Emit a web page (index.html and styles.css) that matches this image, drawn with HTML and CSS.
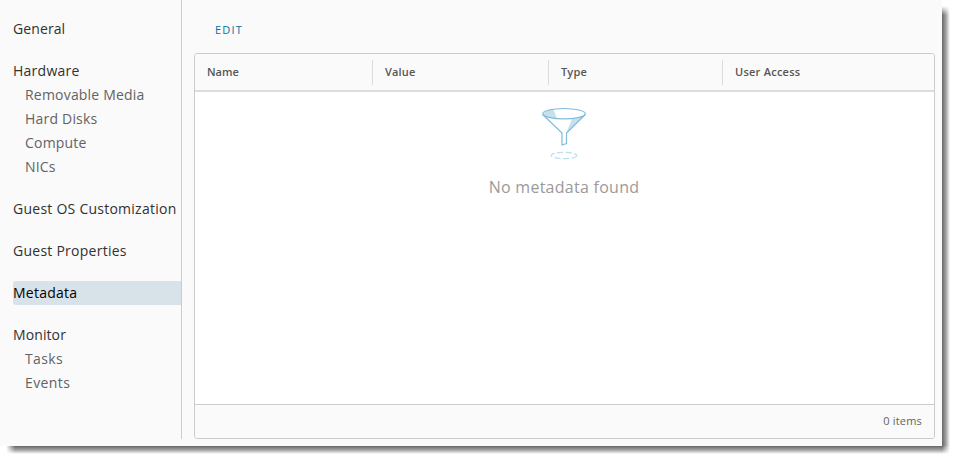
FILE: index.html
```html
<!DOCTYPE html>
<html lang="en">
<head>
<meta charset="utf-8">
<title>Metadata</title>
<link rel="stylesheet" href="styles.css">
</head>
<body>
<div class="window">
  <nav class="sidebar">
    <section class="group"><a class="item general">General</a></section>
    <section class="group">
      <a class="item hardware">Hardware</a>
      <a class="item sub removable">Removable Media</a>
      <a class="item sub disks">Hard Disks</a>
      <a class="item sub compute">Compute</a>
      <a class="item sub nics">NICs</a>
    </section>
    <section class="group"><a class="item customization">Guest OS Customization</a></section>
    <section class="group"><a class="item properties">Guest Properties</a></section>
    <section class="group"><a class="item active">Metadata</a></section>
    <section class="group">
      <a class="item monitor">Monitor</a>
      <a class="item sub tasks">Tasks</a>
      <a class="item sub events">Events</a>
    </section>
  </nav>
  <main class="content">
    <div class="toolbar"><a class="edit">EDIT</a></div>
    <div class="datagrid">
      <div class="head">
        <div class="col"><span class="h-name">Name</span></div>
        <div class="col"><span class="h-value">Value</span></div>
        <div class="col"><span class="h-type">Type</span></div>
        <div class="col"><span class="h-access">User Access</span></div>
      </div>
      <div class="empty">
        <svg class="funnel" width="46" height="54" viewBox="0 0 46 54" fill="none">
          <path d="M2 7C4 3.500 8 2.300 12.500 2L16 11.500C9 11 4 10 2 7Z" fill="#c5e1ef"/>
          <path d="M43.500 8.500L26 26V24L31 12C36 11.500 41 10.500 43.500 8.500Z" fill="#c5e1ef"/>
          <ellipse cx="23" cy="6.700" rx="21.300" ry="5.200" stroke="#7fbddb" stroke-width="1.200"/>
          <path d="M1.700 7.500L21 26V38L25.500 36.500V26L44.300 7.500" stroke="#7fbddb" stroke-width="1.200"/>
          <ellipse cx="23" cy="48.500" rx="12.800" ry="3.200" stroke="#bfdfed" stroke-width="1.200" stroke-dasharray="6 2.500"/>
        </svg>
        <p class="message">No metadata found</p>
      </div>
      <div class="foot"><span class="count">0 items</span></div>
    </div>
  </main>
</div>
</body>
</html>
```
FILE: styles.css
```css
* { box-sizing: border-box; }
html, body { margin: 0; height: 100%; overflow: hidden; background: #fff; }
body { font-family: "Open Sans", "Noto Sans", sans-serif; font-size: 14px; }

.window {
  position: relative;
  display: flex;
  width: 942px;
  height: 446px;
  background: #fafafa;
}
.window::before, .window::after { content: ""; position: absolute; }
.window::before {
  left: 6px; right: -8px; top: 100%; height: 8px;
  background: linear-gradient(#666, #a4a4a4 50%, #fff);
  mask-image: linear-gradient(90deg, transparent, #000 9px, #000 calc(100% - 8px), transparent);
}
.window::after {
  left: 100%; top: 6px; bottom: 0; width: 8px;
  background: linear-gradient(90deg, #666, #a4a4a4 50%, #fff);
  mask-image: linear-gradient(transparent, #000 9px);
}

.sidebar {
  display: flex;
  flex-direction: column;
  gap: 18px;
  width: 182px;
  height: 439px;
  padding: 17px 0 0 13px;
  border-right: 1px solid #ccc;
}
.item { display: block; line-height: 24px; color: #313131; white-space: nowrap; letter-spacing: 0.25px; }
.sub { padding-left: 12px; color: #636363; letter-spacing: 0.2px; }
.general, .monitor { letter-spacing: 0.1px; }
.tasks, .events { letter-spacing: 0.4px; }
.active { background: #d8e3e9; color: #000; border-radius: 3px 0 0 3px; }

.content {
  flex: 1;
  display: flex;
  flex-direction: column;
  padding: 0 7px 7px 12px;
}
.toolbar { height: 53px; padding: 18px 0 0 21px; font-size: 11px; line-height: 24px; }
.edit { color: #0072a3; letter-spacing: 1.2px; }

.datagrid {
  flex: 1;
  display: flex;
  flex-direction: column;
  border: 1px solid #ccc;
  border-radius: 3px;
  overflow: hidden;
  background: #fff;
}
.head {
  display: grid;
  grid-template-columns: 177px 176px 174px 1fr;
  height: 38px;
  padding-top: 6px;
  border-bottom: 2px solid #ddd;
  background: #fafafa;
  color: #565656;
  font-size: 11px;
  font-weight: 600;
}
.col { height: 25px; line-height: 24px; padding-left: 12px; }
.col + .col { border-left: 1px solid #ddd; }
.h-access { letter-spacing: 0.24px; }
.h-value, .h-type { letter-spacing: 0.15px; }
.empty {
  flex: 1;
  display: flex;
  flex-direction: column;
  align-items: center;
  padding: 15px 1px 0 0;
}
.funnel { display: block; }
.message { margin: 14px 0 0; font-size: 16px; line-height: 24px; color: #9a9a9a; letter-spacing: 0.27px; }
.foot {
  height: 34px;
  padding-right: 12px;
  border-top: 1px solid #ccc;
  background: #fafafa;
  color: #636363;
  font-size: 11px;
  line-height: 32px;
  text-align: right;
}
.count { letter-spacing: 0.18px; }
```
